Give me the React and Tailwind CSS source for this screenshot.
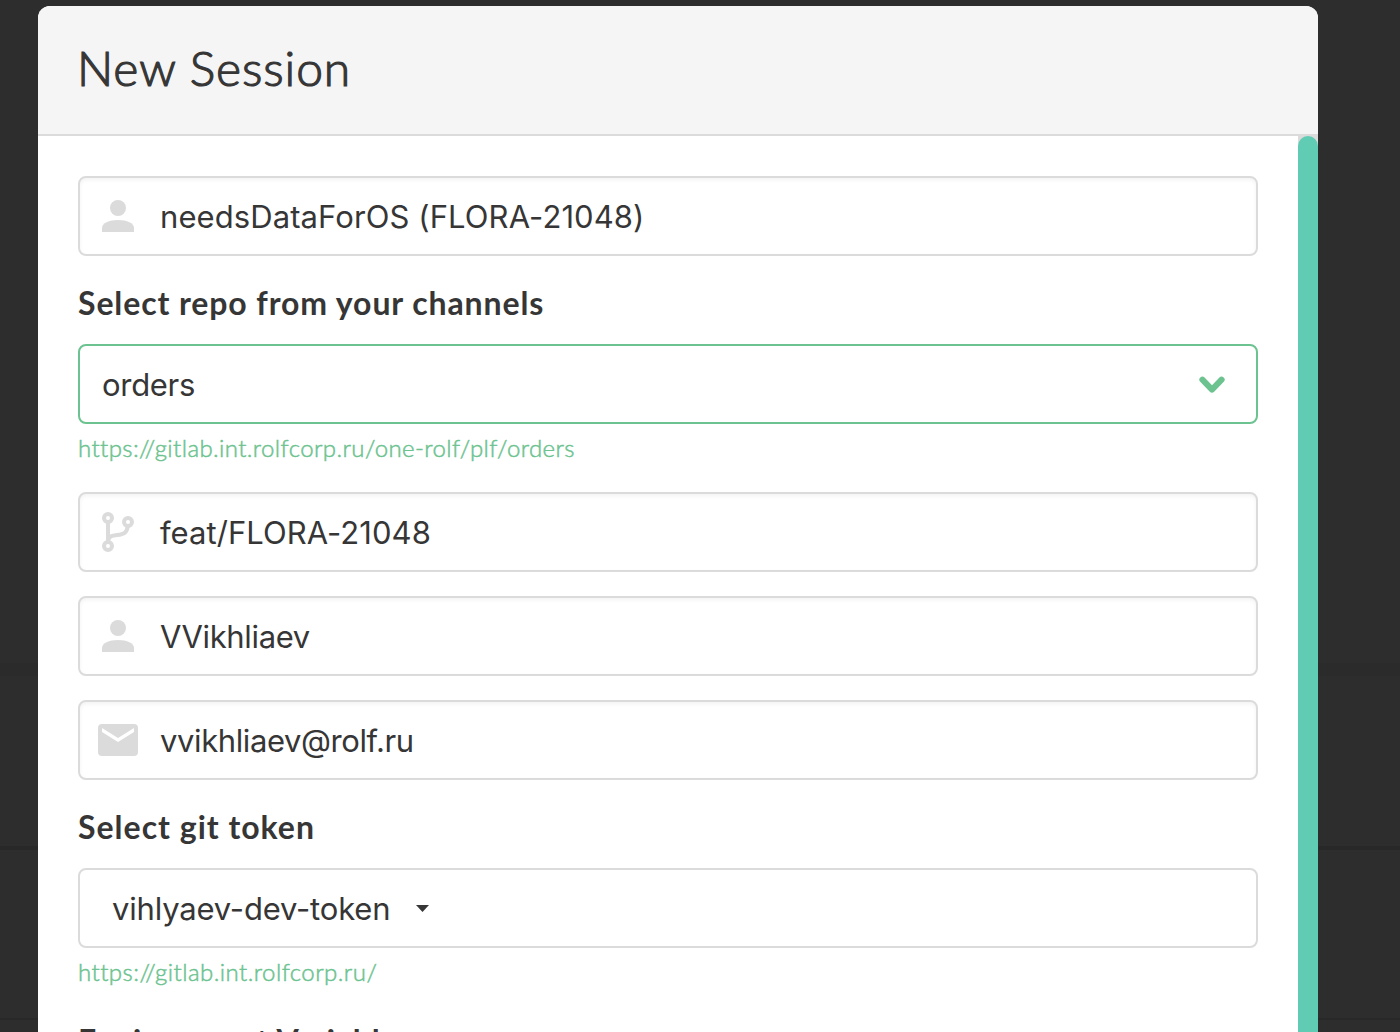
const INPUT_FONT = "font-['Inter','Liberation_Sans',sans-serif]";

function PersonIcon() {
  return (
    <svg width="40" height="40" viewBox="0 0 40 40" fill="#dbdbdb">
      <circle cx="20" cy="12" r="8" />
      <path d="M4 36v-4C4 27 11 24 20 24s16 3 16 8v4z" />
    </svg>
  );
}

function BranchIcon() {
  return (
    <svg width="40" height="40" viewBox="0 0 40 40" fill="none" stroke="#dbdbdb" strokeWidth="4">
      <circle cx="10" cy="6" r="4" />
      <circle cx="10" cy="34" r="4" />
      <circle cx="30" cy="10" r="4" />
      <path d="M10 10v20M10 29c1-5 4-5.5 9-6 7-.8 10-2 10.8-9" />
    </svg>
  );
}

function MailIcon() {
  return (
    <svg width="40" height="40" viewBox="0 0 40 40" fill="#dbdbdb">
      <path d="M4 4h32a4 4 0 0 1 4 4v24a4 4 0 0 1-4 4H4a4 4 0 0 1-4-4V8a4 4 0 0 1 4-4zm0 4v4l16 10 16-10V8L20 18z" />
    </svg>
  );
}

function Field({ icon, tracking, children }) {
  return (
    <div className="flex h-20 shrink-0 items-center rounded-lg border-2 border-[#dbdbdb] bg-white pl-[18px] shadow-[inset_0_2px_4px_rgba(10,10,10,0.05)]">
      {icon}
      <span className={`ml-[22px] pt-0.5 text-[31px] leading-9 whitespace-nowrap text-[#363636] ${INPUT_FONT} ${tracking}`}>
        {children}
      </span>
    </div>
  );
}

function Label({ tracking, children }) {
  return (
    <div className={`flex h-[88px] shrink-0 items-center pt-1.5 font-['Lato',sans-serif] text-[32px] leading-10 font-bold whitespace-nowrap text-[#363636] ${tracking}`}>
      {children}
    </div>
  );
}

function Help({ className, children }) {
  return (
    <div className={`shrink-0 pt-1.5 font-['Lato',sans-serif] text-2xl leading-9 font-light whitespace-nowrap text-[#6cc390] [-webkit-text-stroke:0.5px_#6cc390] ${className}`}>
      {children}
    </div>
  );
}

export default function App() {
  return (
    <div className="relative h-[1032px] w-[1400px] overflow-hidden bg-[#2d2d2d]">
      <div className="flex h-full flex-col">
        <div className="h-[663px] bg-[#2d2d2d]" />
        <div className="h-[13px] bg-[#2b2b2b]" />
        <div className="h-[170px]" />
        <div className="h-1 bg-[#282828]" />
        <div className="h-[168px]" />
        <div className="h-0.5 bg-[#282828]" />
      </div>
      <div className="absolute top-1.5 left-[38px] flex h-[1026px] w-[1280px] flex-col overflow-hidden rounded-t-xl bg-white">
        <header className="flex h-[130px] shrink-0 items-center border-b-2 border-[#dbdbdb] bg-[#f5f5f5] pb-1 pl-[39px]">
          <h1 className="font-['Lato',sans-serif] text-[48px] leading-[54px] font-light tracking-[0.9px] text-[#363636] [-webkit-text-stroke:1.2px_#363636]">New Session</h1>
        </header>
        <div className="flex min-h-0 flex-1">
          <main className="flex flex-1 flex-col overflow-hidden px-10 pt-10">
            <Field icon={<PersonIcon />} tracking="tracking-[0.09px]">needsDataForOS (FLORA-21048)</Field>
            <Label tracking="tracking-[0.89px]">Select repo from your channels</Label>
            <div className="flex h-20 shrink-0 items-center justify-between rounded-lg border-2 border-[#6cc390] bg-white pr-[30px] pl-[22px]">
              <span className={`pt-0.5 text-[31px] leading-9 tracking-[-0.3px] text-[#363636] ${INPUT_FONT}`}>orders</span>
              <svg width="28" height="20" viewBox="0 0 28 20" fill="none" stroke="#6cc390" strokeWidth="6" strokeLinecap="round" strokeLinejoin="round">
                <path d="M4.4 5.6 14 15.6 23.6 5.6" />
              </svg>
            </div>
            <Help className="h-[68px] tracking-[0.4px]">https://gitlab.int.rolfcorp.ru/one-rolf/plf/orders</Help>
            <div className="flex flex-col gap-6">
              <Field icon={<BranchIcon />} tracking="tracking-[0.05px]">feat/FLORA-21048</Field>
              <Field icon={<PersonIcon />} tracking="tracking-[-0.35px]">VVikhliaev</Field>
              <Field icon={<MailIcon />} tracking="tracking-[-0.4px]">vvikhliaev@rolf.ru</Field>
            </div>
            <Label tracking="tracking-[1px]">Select git token</Label>
            <div className="flex h-20 shrink-0 items-center rounded-lg border-2 border-[#dbdbdb] bg-white pl-8">
              <span className={`pt-0.5 text-[31px] leading-9 tracking-[-0.18px] text-[#363636] ${INPUT_FONT}`}>vihlyaev-dev-token</span>
              <svg className="ml-[26px]" width="13" height="7" viewBox="0 0 13 7" fill="#363636">
                <path d="M0 0h13L6.5 7z" />
              </svg>
            </div>
            <Help className="h-[46px] tracking-[0.45px]">https://gitlab.int.rolfcorp.ru/</Help>
            <Label tracking="tracking-[0.8px]">Environment Variables</Label>
          </main>
          <div className="w-5 shrink-0 bg-[#dbdbdb]">
            <div className="h-full rounded-t-full bg-[#60ccb4]" />
          </div>
        </div>
      </div>
    </div>
  );
}
